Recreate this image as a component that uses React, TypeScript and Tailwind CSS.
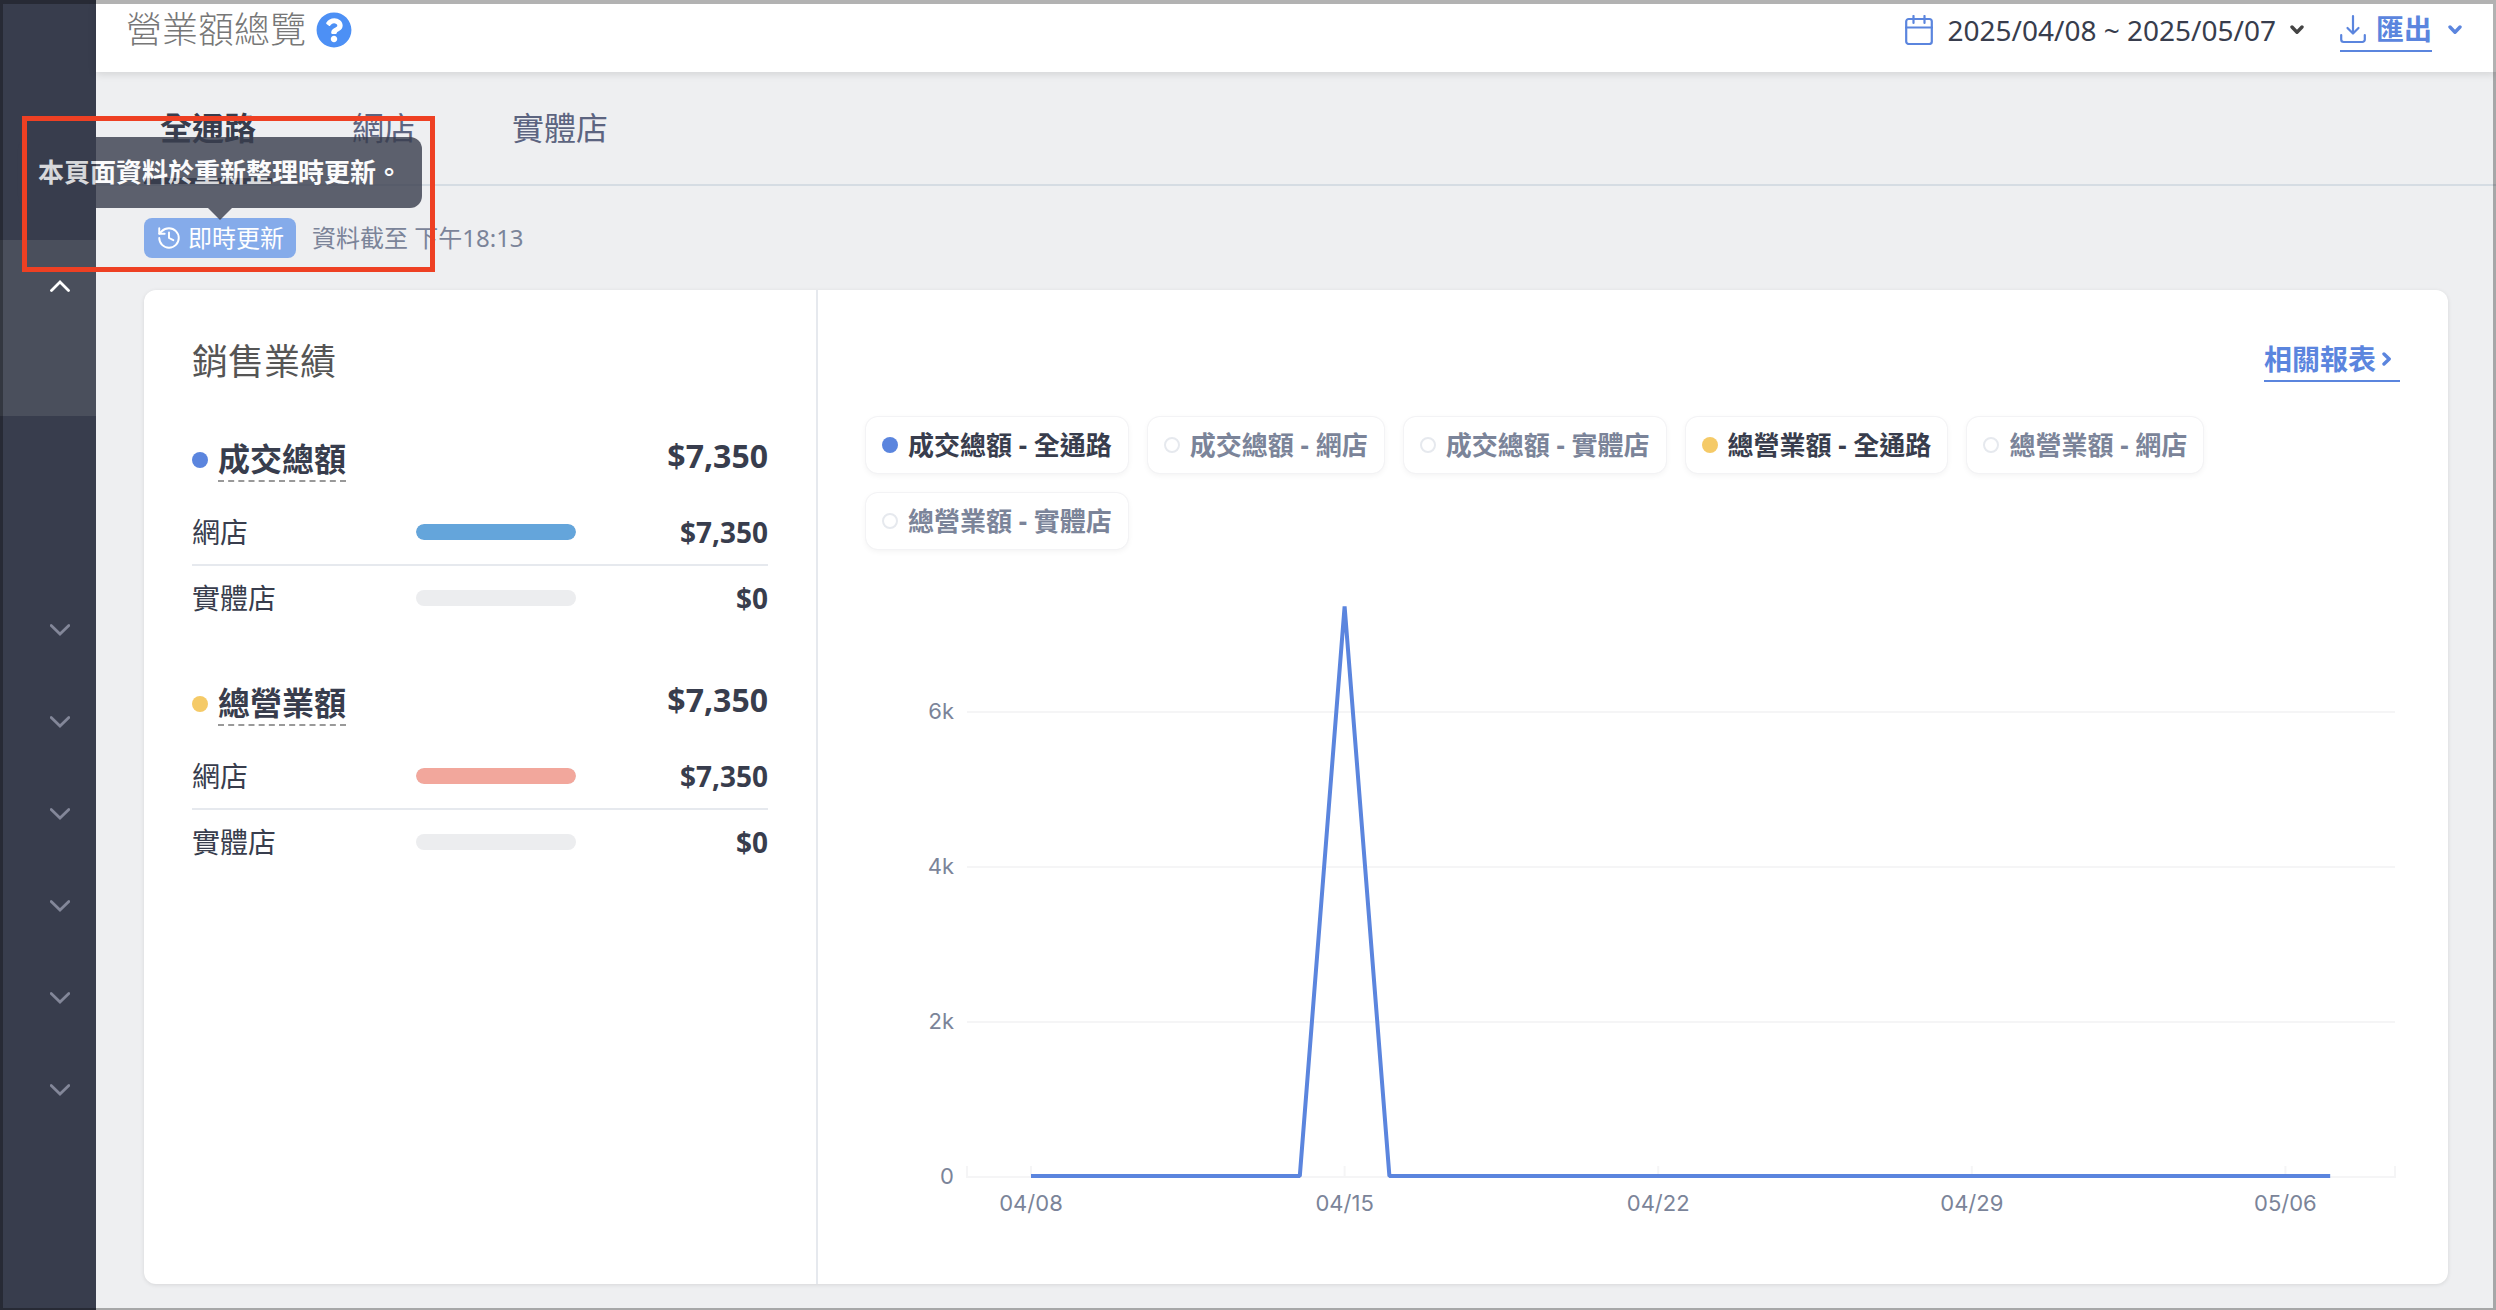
import { useState } from 'react';
import { History } from 'lucide-react';
import { FaQuestionCircle } from 'react-icons/fa';

interface ChannelRow {
  label: string;
  amount: number;
}

interface SalesGroup {
  title: string;
  dotClass: string;
  barClass: string;
  total: number;
  rows: ChannelRow[];
}

interface Series {
  id: string;
  label: string;
  dotClass: string;
}

const groups: SalesGroup[] = [
  {
    title: '成交總額',
    dotClass: 'bg-[#5b85de]',
    barClass: 'bg-[#64a5db]',
    total: 7350,
    rows: [
      { label: '網店', amount: 7350 },
      { label: '實體店', amount: 0 },
    ],
  },
  {
    title: '總營業額',
    dotClass: 'bg-[#f5ca67]',
    barClass: 'bg-[#f2a79c]',
    total: 7350,
    rows: [
      { label: '網店', amount: 7350 },
      { label: '實體店', amount: 0 },
    ],
  },
];

const seriesList: Series[] = [
  { id: 'gmv-all', label: '成交總額 - 全通路', dotClass: 'bg-[#5b85de]' },
  { id: 'gmv-online', label: '成交總額 - 網店', dotClass: 'bg-[#64a5db]' },
  { id: 'gmv-retail', label: '成交總額 - 實體店', dotClass: 'bg-[#8fc7a4]' },
  { id: 'rev-all', label: '總營業額 - 全通路', dotClass: 'bg-[#f5ca67]' },
  { id: 'rev-online', label: '總營業額 - 網店', dotClass: 'bg-[#f2a79c]' },
  { id: 'rev-retail', label: '總營業額 - 實體店', dotClass: 'bg-[#b39ddb]' },
];

const tabs = ['全通路', '網店', '實體店'];
const menuItems = ['訂單', '商品', '顧客', '行銷', '數據', '設定'];

// 30 days starting at 04/08, the only sale is on 04/15
const dailySales = Array.from({ length: 30 }, (_, day) => (day === 7 ? 7350 : 0));
const dateLabels = [
  { day: 0, text: '04/08' },
  { day: 7, text: '04/15' },
  { day: 14, text: '04/22' },
  { day: 21, text: '04/29' },
  { day: 28, text: '05/06' },
];

const formatMoney = (value: number) => `$${value.toLocaleString('en-US')}`;

function SmallChevron({ className = '' }: { className?: string }) {
  return (
    <svg viewBox="0 0 14 10" fill="none" className={`h-2.5 w-3.5 ${className}`} aria-hidden="true">
      <path d="M2 2l5 5.2L12 2" stroke="currentColor" strokeWidth="3.4" strokeLinecap="round" strokeLinejoin="round" />
    </svg>
  );
}

function Sidebar() {
  return (
    <nav className="w-24 shrink-0 bg-[#383d4d] pt-60">
      <div className="h-44 bg-[#4a4f5c]">
        <button aria-label="收合選單" className="flex h-[92px] w-full items-center pl-[50px] text-white">
          <svg viewBox="0 0 20 12" fill="none" className="h-3 w-5">
            <path d="M1.5 10.5L10 2l8.5 8.5" stroke="currentColor" strokeWidth="2.8" strokeLinecap="round" />
          </svg>
        </button>
      </div>
      <div className="mt-[168px]">
        {menuItems.map((item) => (
          <button key={item} aria-label={item} className="flex h-[92px] w-full items-center pl-[50px] text-[#838799]">
            <svg viewBox="0 0 20 12" fill="none" className="h-3 w-5">
              <path d="M1.2 1.5l8.800 8.5 8.800-8.5" stroke="currentColor" strokeWidth="2.8" strokeLinecap="round" />
            </svg>
          </button>
        ))}
      </div>
    </nav>
  );
}

function PageHeader() {
  return (
    <header className="relative flex h-[72px] items-center justify-between bg-white pr-[34px] pb-3 pl-[30px] shadow-[0_2px_8px_rgba(0,0,0,0.12)]">
      <div className="flex items-center gap-2.5">
        <h1 className="text-4xl font-light text-[#777777]">營業額總覽</h1>
        <button aria-label="說明" className="text-[#4d90f5]">
          <FaQuestionCircle className="size-9" />
        </button>
      </div>

      <div className="flex items-center">
        <button className="flex items-center text-[28px] leading-9 text-[#383d4d]">
          <svg viewBox="0 0 28 30" fill="none" className="mr-3.5 h-[30px] w-7 text-[#5b85de]" aria-hidden="true">
            <rect x="1.2" y="4" width="25.6" height="25" rx="2.5" stroke="currentColor" strokeWidth="2.2" />
            <path d="M1 12.500h26M8.500 1v7M19.500 1v7" stroke="currentColor" strokeWidth="2.2" strokeLinecap="round" />
          </svg>
          2025/04/08 ~ 2025/05/07
          <SmallChevron className="ml-3.5 text-[#444444]" />
        </button>

        <button className="ml-9 flex items-center text-[#5b85de]">
          <span className="flex h-11 items-center gap-2.5 border-b-2 border-[#5b85de] text-[28px] leading-9 font-bold">
            <svg viewBox="0 0 26 30" fill="none" className="h-[30px] w-[26px]" aria-hidden="true">
              <path d="M13 2v16M7.500 14l5.500 5.500 5.500-5.500" stroke="currentColor" strokeWidth="2.2" strokeLinecap="round" strokeLinejoin="round" />
              <path d="M1.200 21v4.500a2.500 2.500 0 0 0 2.500 2.500h18.600a2.500 2.500 0 0 0 2.500-2.500V21" stroke="currentColor" strokeWidth="2.2" strokeLinecap="round" />
            </svg>
            匯出
          </span>
          <SmallChevron className="ml-4" />
        </button>
      </div>
    </header>
  );
}

function ChannelTabs() {
  const [active, setActive] = useState('全通路');

  return (
    <div role="tablist" className="flex h-[114px] gap-16 border-b-2 border-[#d5dce3] pl-12">
      {tabs.map((tab) => (
        <button
          key={tab}
          role="tab"
          aria-selected={tab === active}
          onClick={() => setActive(tab)}
          className={`relative px-4 text-[32px] ${tab === active ? 'font-bold text-[#383d4d]' : 'text-[#5c6480]'}`}
        >
          {tab}
          {tab === active && <span className="absolute inset-x-0 bottom-0 h-1.5 bg-[#383d4d]"></span>}
        </button>
      ))}
    </div>
  );
}

function UpdateStatus() {
  return (
    <div className="relative flex items-center gap-4">
      <div className="relative flex h-10 items-center gap-1.5 rounded-lg bg-[#85abea] px-3 text-2xl text-white">
        <History className="size-[26px]" strokeWidth={1.8} />
        即時更新
        <div
          role="tooltip"
          className="absolute bottom-full left-1/2 z-20 mb-2.5 flex h-[71px] -translate-x-1/2 items-center rounded-xl bg-[#383d4d] px-5 text-[26px] font-bold whitespace-nowrap opacity-80"
        >
          本頁面資料於重新整理時更新。
          <span className="absolute top-full left-1/2 -translate-x-1/2 border-x-12 border-t-12 border-x-transparent border-t-[#383d4d]"></span>
        </div>
      </div>
      <p className="text-2xl text-[#7b8499]">資料截至 下午18:13</p>
      <div className="pointer-events-none absolute -top-[102px] -left-[122px] z-30 h-[156px] w-[413px] border-5 border-[#ee4023]"></div>
    </div>
  );
}

function SalesSummary({ group }: { group: SalesGroup }) {
  return (
    <section>
      <div className="flex h-11 items-start justify-between text-[32px] font-bold text-[#383d4d]">
        <h3 className="flex items-center gap-2.5">
          <span className={`size-4 rounded-full ${group.dotClass}`}></span>
          <span className="h-11 border-b-2 border-dashed border-[#999999] leading-[42px]">{group.title}</span>
        </h3>
        <span className="leading-9">{formatMoney(group.total)}</span>
      </div>
      <table className="mt-[18px] w-full table-fixed border-separate border-spacing-0 text-[28px] leading-16 text-[#383d4d]">
        <tbody>
          {group.rows.map((row, index) => {
            const line = index < group.rows.length - 1 ? 'border-b-2 border-[#e6e9ee]' : '';
            return (
              <tr key={row.label}>
                <th scope="row" className={`w-56 p-0 text-left font-normal ${line}`}>{row.label}</th>
                <td className={`w-40 p-0 align-middle ${line}`}>
                  <div className="h-4 overflow-hidden rounded-full bg-[#ecedef]">
                    <div className={`h-full rounded-full ${group.barClass}`} style={{ width: `${(row.amount / group.total) * 100}%` }}></div>
                  </div>
                </td>
                <td className={`p-0 text-right font-bold ${line}`}>{formatMoney(row.amount)}</td>
              </tr>
            );
          })}
        </tbody>
      </table>
    </section>
  );
}

function SalesChart() {
  const left = 101;
  const right = 1529;
  const bottom = 596;
  const x = (day: number) => 165 + day * 44.8;
  const y = (value: number) => bottom - (value / 2000) * 155;
  const points = dailySales.map((value, day) => `${x(day)},${y(value) - 1}`).join(' ');

  return (
    <svg viewBox="0 0 1534 655" className="mt-8 w-full font-[Inter,sans-serif] text-[22px]" role="img" aria-label="銷售業績趨勢">
      {[6000, 4000, 2000, 0].map((value) => (
        <g key={value}>
          <line x1={left} x2={right} y1={y(value)} y2={y(value)} stroke="#f5f5f6" strokeWidth="2" />
          <text x="88" y={y(value) + 7} textAnchor="end" fill="#7b8499">
            {value === 0 ? '0' : `${value / 1000}k`}
          </text>
        </g>
      ))}
      {[left, ...dateLabels.map((label) => x(label.day)), right].map((tickX) => (
        <line key={tickX} x1={tickX} x2={tickX} y1={bottom - 11} y2={bottom + 1} stroke="#f5f5f6" strokeWidth="2" />
      ))}
      {dateLabels.map((label) => (
        <text key={label.text} x={x(label.day)} y={bottom + 34} textAnchor="middle" fill="#7b8499">
          {label.text}
        </text>
      ))}
      <polyline points={points} fill="none" stroke="#5b85de" strokeWidth="4" strokeLinejoin="bevel" />
    </svg>
  );
}

function SeriesFilter() {
  const [selected, setSelected] = useState<string[]>(['gmv-all', 'rev-all']);

  const toggle = (id: string) => {
    setSelected((prev) => (prev.includes(id) ? prev.filter((item) => item !== id) : [...prev, id]));
  };

  return (
    <div className="mt-[35px] flex flex-wrap gap-5">
      {seriesList.map((series) => {
        const isOn = selected.includes(series.id);
        return (
          <button
            key={series.id}
            aria-pressed={isOn}
            onClick={() => toggle(series.id)}
            className={`flex h-14 items-center gap-2.5 rounded-xl px-4 text-[26px] font-bold shadow-[0_0_0_1px_#f3f3f5,0_2px_6px_rgba(0,0,0,0.06)] ${
              isOn ? 'text-[#383d4d]' : 'text-[#7b8499]'
            }`}
          >
            <span className={`size-4 rounded-full ${isOn ? series.dotClass : 'border-2 border-[#e6e9ee]'}`}></span>
            {series.label}
          </button>
        );
      })}
    </div>
  );
}

export default function App() {
  return (
    <div className="relative flex min-h-screen bg-[#eeeff1] font-['Noto_Sans','Noto_Sans_CJK_TC',sans-serif]">
      <Sidebar />
      <div className="min-w-0 flex-1">
        <PageHeader />
        <ChannelTabs />
        <main className="px-12 pt-8 pb-6">
          <UpdateStatus />
          <div className="mt-8 flex rounded-xl bg-white shadow-[0_1px_4px_rgba(0,0,0,0.1)]">
            <div className="flex w-[674px] shrink-0 flex-col gap-[52px] border-r-2 border-[#e6e9ee] p-12">
              <h2 className="text-4xl leading-12 text-[#555555]">銷售業績</h2>
              {groups.map((group) => (
                <SalesSummary key={group.title} group={group} />
              ))}
            </div>
            <div className="min-w-0 flex-1 p-12">
              <div className="flex justify-end">
                <a href="#reports" className="flex h-11 items-center border-b-2 border-[#5b85de] text-[28px] leading-[42px] font-bold text-[#5b85de]">
                  相關報表
                  <SmallChevron className="mr-1.5 ml-1 -rotate-90" />
                </a>
              </div>
              <SeriesFilter />
              <SalesChart />
            </div>
          </div>
        </main>
      </div>
      {/* frame around the whole window */}
      <div className="pointer-events-none absolute inset-0 z-40 border-t-4 border-r-3 border-b-2 border-l-3 border-black/30"></div>
    </div>
  );
}
